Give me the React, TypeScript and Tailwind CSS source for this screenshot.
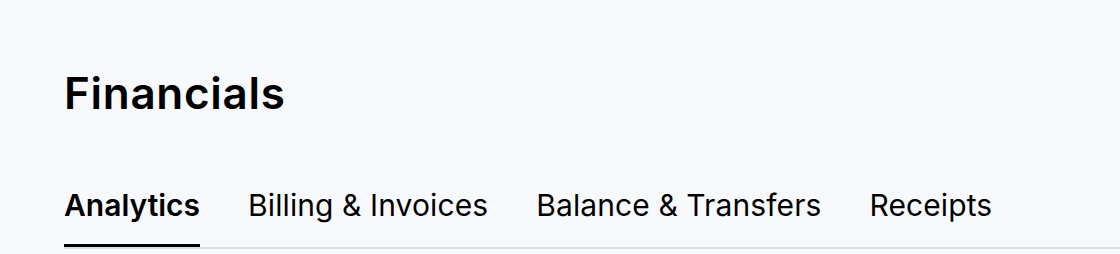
import { useState } from 'react';

const TABS = ['Analytics', 'Billing & Invoices', 'Balance & Transfers', 'Receipts'];

export default function App() {
  const [active, setActive] = useState('Analytics');

  return (
    <div className="min-h-[254px] w-full bg-[#f8f9fd] pl-16 pt-[67px] text-black" style={{ fontFamily: 'Inter, "Noto Sans", sans-serif' }}>
      <h1 className="text-[44px] font-semibold leading-[52px] tracking-[0.7px]">Financials</h1>
      <div className="mt-[68px] flex gap-12 border-b-2 border-[#dae0e8]">
        {TABS.map(tab => (
          <button
            key={tab}
            onClick={() => setActive(tab)}
            className={
              tab === active
                ? 'border-b-[3px] border-black pb-[21px] text-[30px] font-semibold leading-[36px]'
                : 'border-b-[3px] border-transparent pb-[21px] text-[30px] font-normal leading-[36px] tracking-[0.1px]'
            }
          >
            {tab}
          </button>
        ))}
      </div>
    </div>
  );
}
